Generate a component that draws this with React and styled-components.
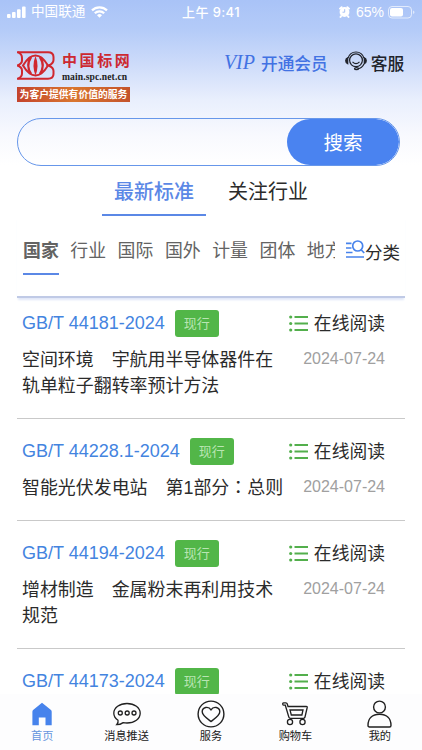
import React, { useState } from "react";
import styled, { createGlobalStyle } from "styled-components";

const standards = [
  {
    code: "GB/T 44181-2024",
    title: "空间环境　宇航用半导体器件在轨单粒子翻转率预计方法",
    date: "2024-07-24",
  },
  {
    code: "GB/T 44228.1-2024",
    title: "智能光伏发电站　第1部分：总则",
    date: "2024-07-24",
  },
  {
    code: "GB/T 44194-2024",
    title: "增材制造　金属粉末再利用技术规范",
    date: "2024-07-24",
  },
  { code: "GB/T 44173-2024", title: "", date: "" },
];

const categories = ["国家", "行业", "国际", "国外", "计量", "团体", "地方"];

const SignalIcon = () => (
  <svg width="19" height="12" viewBox="0 0 19 12" fill="#fff">
    <rect x="0" y="8" width="3.6" height="4" rx="1" />
    <rect x="5" y="6" width="3.6" height="6" rx="1" />
    <rect x="10" y="3.3" width="3.6" height="8.7" rx="1" />
    <rect x="15" y="0.5" width="3.6" height="11.5" rx="1" />
  </svg>
);

const WifiIcon = () => (
  <svg width="17" height="12" viewBox="0 0 17 12" fill="none" stroke="#fff" strokeWidth="2.2">
    <path d="M1 4.4a10.6 10.6 0 0 1 15 0" />
    <path d="M3.8 7.3a6.6 6.6 0 0 1 9.4 0" />
    <path d="M8.5 11.8 6 9.3a3.6 3.6 0 0 1 5 0z" fill="#fff" stroke="none" />
  </svg>
);

const AlarmIcon = () => (
  <svg width="11" height="12" viewBox="0 0 11 12">
    <circle cx="5.5" cy="6" r="4.9" fill="#fff" />
    <path d="M1 2.6 2.6 1.2M10 2.6 8.4 1.2M2 10.2 1.5 11M9 10.2l.5.8" stroke="#fff" strokeWidth="1.9" strokeLinecap="round" />
    <path d="M5.7 3.2v3H3.5" fill="none" stroke="#a9c1f2" strokeWidth="1" />
  </svg>
);

const BatteryIcon = () => (
  <svg width="27" height="13" viewBox="0 0 27 13">
    <rect x="0.5" y="0.5" width="23" height="11.5" rx="3.5" fill="none" stroke="#fff" opacity="0.65" />
    <rect x="2" y="2" width="13" height="8.5" rx="2" fill="#fff" />
    <path d="M25 4.5c2 .6 2 3 0 3.6z" fill="#fff" opacity="0.6" />
  </svg>
);

const LogoMark = () => (
  <svg width="38" height="29" viewBox="0 0 38 29" fill="none" stroke="#d0272f" strokeWidth="2">
    <path d="M0 1.2H31Q36.500 1.2 36.500 6V9Q36.500 12.5 31.500 14.5Q36.500 16.5 36.500 20V23Q36.500 27.7 31 27.7H0" />
    <path d="M1 1.2Q5 3 5 7V9.5Q5 13 0 14.5Q5 16 5 19.5V22.5Q5 26 1 27.7" />
    <path d="M6 14.5Q12 4.500 18.5 4.500T31 14.5Q25 24.500 18.5 24.500T6 14.5Z" />
    <path d="M14 6Q8.5 14.5 14 23M23 6Q28.5 14.5 23 23" strokeWidth="2.4" />
    <path d="M18.5 5Q22.5 14.5 18.5 24.5Q14.5 14.5 18.5 5Z" fill="#d0272f" stroke="none" />
  </svg>
);

const HeadsetIcon = () => (
  <svg width="22" height="20" viewBox="0 0 22 20" fill="none" stroke="#20232b" strokeWidth="1.2">
    <path d="M3 7.2C4.2 3.2 7 1 11 1s6.8 2.2 8 6.2" />
    <circle cx="11" cy="9.3" r="6.4" />
    <path d="M7.5 10.8q3.5 3.6 7 0" />
    <path d="M19 13q-2 4.3-6 4.6" />
    <path d="M2.7 6.8v6Q.7 12 .7 9.8t2-3zM19.3 6.8v6q2-.8 2-3t-2-3z" fill="#20232b" />
    <ellipse cx="11.5" cy="17.7" rx="2" ry="1" />
  </svg>
);

const FilterIcon = () => (
  <svg width="19" height="20" viewBox="0 0 19 20" fill="none" stroke="#4783ec" strokeWidth="1.7">
    <path d="M0 4.3h5.5M0 9h5.5M0 13.5h6.5M0 18h18" />
    <circle cx="11.7" cy="7" r="5" />
    <path d="m15.2 10.7 3 3.3" />
  </svg>
);

const ListIcon = () => (
  <svg width="19" height="17" viewBox="0 0 19 17" fill="#53af4c">
    <circle cx="1.7" cy="2" r="1.6" />
    <circle cx="1.7" cy="8.5" r="1.6" />
    <circle cx="1.7" cy="15" r="1.6" />
    <path d="M5.5 1.1H19v1.9H5.5zM5.5 7.6H19v1.9H5.5zM5.5 14.1H19v1.9H5.5z" />
  </svg>
);

const HomeIcon = () => (
  <svg width="20" height="24" viewBox="0 0 20 24">
    <path d="M10 .8 19 8Q19.7 8.7 19.7 9.7V23.2H13.5V15.5H6.8V23.2H.4V9.7Q.4 8.7 1.1 8Z" fill="#4783ec" />
  </svg>
);

const MessageIcon = () => (
  <svg width="28" height="24" viewBox="0 0 28 24" fill="none" stroke="#202020" strokeWidth="1.3">
    <path d="M5 18.2C2.3 16.5.8 14 .8 11.3.8 5.7 6.5 1.5 14 1.5s13.2 4.2 13.2 9.8S21.5 21 14 21q-2 0-3.8-.4Q7 22.8 3.7 22.7 5.6 20.7 5 18.2Z" />
    <circle cx="7.3" cy="11" r="2" />
    <circle cx="14.2" cy="11" r="2" />
    <circle cx="21" cy="11" r="2" />
  </svg>
);

const ServiceIcon = () => (
  <svg width="28" height="28" viewBox="0 0 28 28" fill="none" stroke="#202020" strokeWidth="1.4">
    <circle cx="14" cy="14" r="12.9" />
    <path d="M14 21.5C10 18.500 5.200 15.500 5.200 11.800 5.200 7 11.500 5.800 14 9.800 16.500 5.800 22.800 7 22.800 11.800 22.800 15.500 18 18.500 14 21.500Z" />
  </svg>
);

const CartIcon = () => (
  <svg width="26" height="24" viewBox="0 0 26 24" fill="none" stroke="#202020" strokeWidth="1.3">
    <path d="M6 4.5 5.3 2Q5 .9 3.9.9H1.5Q.7.9.7 2T1.5 3.2H3.3L6.8 15Q7.2 16.3 8.5 16.3H21.5Q22.7 16.3 23 15L25.2 5.5Q25.4 4.5 24.4 4.5Z" />
    <path d="M8 8H21L19.9 13H9.3Z" />
    <circle cx="8" cy="20" r="2.6" />
    <circle cx="20.5" cy="20" r="2.6" />
  </svg>
);

const UserIcon = () => (
  <svg width="25" height="28" viewBox="0 0 25 28" fill="none" stroke="#202020" strokeWidth="1.4">
    <circle cx="12.5" cy="7" r="5.9" />
    <path d="M1 25.5C1 18 5.7 14.300 12.5 14.300S24 18 24 25.5Q24 27 22.5 27H2.5Q1 27 1 25.5Z" />
  </svg>
);

const menus = [
  { name: "首页", icon: <HomeIcon /> },
  { name: "消息推送", icon: <MessageIcon /> },
  { name: "服务", icon: <ServiceIcon /> },
  { name: "购物车", icon: <CartIcon /> },
  { name: "我的", icon: <UserIcon /> },
];

export default function App() {
  const [text, setText] = useState("");
  const [tab, setTab] = useState("最新标准");
  const [category, setCategory] = useState("国家");
  const [menu, setMenu] = useState("首页");

  return (
    <Page>
      <GlobalStyle />
      <StatusBar>
        <StatusSide>
          <SignalIcon />
          <Carrier>中国联通</Carrier>
          <WifiIcon />
        </StatusSide>
        <Clock>上午 9:41</Clock>
        <StatusSide $end>
          <AlarmIcon />
          <Percent>65%</Percent>
          <BatteryIcon />
        </StatusSide>
      </StatusBar>
      <Header>
        <Logo>
          <LogoTop>
            <LogoMark />
            <LogoText>
              <LogoName>中国标网</LogoName>
              <LogoUrl>main.spc.net.cn</LogoUrl>
            </LogoText>
          </LogoTop>
          <Slogan>为客户提供有价值的服务</Slogan>
        </Logo>
        <Vip>
          <VipMark>VIP</VipMark>
          开通会员
        </Vip>
        <Support>
          <HeadsetIcon />
          客服
        </Support>
      </Header>
      <SearchBox>
        <SearchInput value={text} onChange={(e) => setText(e.target.value)} />
        <SearchButton>搜索</SearchButton>
      </SearchBox>
      <Tabs>
        {["最新标准", "关注行业"].map((name) => (
          <Tab key={name} $on={tab === name} onClick={() => setTab(name)}>
            {name}
          </Tab>
        ))}
      </Tabs>
      <CategoryBar>
        <CategoryScroll>
          {categories.map((name) => (
            <Category key={name} $on={category === name} onClick={() => setCategory(name)}>
              {name}
            </Category>
          ))}
        </CategoryScroll>
        <Sort>
          <FilterIcon />
          <span>分类</span>
        </Sort>
      </CategoryBar>
      <List>
        {standards.map((item) => (
          <Item key={item.code}>
            <ItemTop>
              <Code>{item.code}</Code>
              <Badge>现行</Badge>
              <Read>
                <ListIcon />
                在线阅读
              </Read>
            </ItemTop>
            {item.title && (
              <ItemBottom>
                <Title>
                  {item.title.split("：").map((part, i) => (
                    <React.Fragment key={part}>
                      {i > 0 && <Colon>：</Colon>}
                      {part}
                    </React.Fragment>
                  ))}
                </Title>
                <DateText>{item.date}</DateText>
              </ItemBottom>
            )}
          </Item>
        ))}
      </List>
      <BottomBar>
        {menus.map(({ name, icon }) => (
          <MenuButton key={name} $on={menu === name} onClick={() => setMenu(name)}>
            <MenuIcon>{icon}</MenuIcon>
            {name}
          </MenuButton>
        ))}
      </BottomBar>
    </Page>
  );
}

const GlobalStyle = createGlobalStyle`
  * {
    box-sizing: border-box;
  }
  body {
    margin: 0;
    font-family: "Liberation Sans", "Noto Sans CJK SC", sans-serif;
  }
  button {
    font-family: inherit;
    border: none;
    padding: 0;
    background: transparent;
    cursor: pointer;
  }
  svg {
    display: block;
    flex-shrink: 0;
  }
`;
const Page = styled.div`
  display: flex;
  flex-direction: column;
  width: 422px;
  height: 750px;
  overflow: hidden;
  color: #2b2b2b;
  background: linear-gradient(to bottom, #a9c3f7 0, #b4cbf8 30px, #cedcfa 65px, #e9effd 100px, #f8f9fe 135px, #fff 165px);
`;
const StatusBar = styled.div`
  display: grid;
  grid-template-columns: 1fr auto 1fr;
  align-items: center;
  height: 24px;
  padding: 0 7px;
  color: #fff;
`;
const StatusSide = styled.div`
  display: flex;
  align-items: center;
  justify-content: ${(props) => (props.$end ? "flex-end" : "flex-start")};
`;
const Carrier = styled.span`
  margin: 0 6px 0 5px;
  font-size: 13.6px;
  line-height: 20px;
`;
const Clock = styled.div`
  font-family: "Inter", "Noto Sans CJK SC", sans-serif;
  font-size: 13px;
  font-weight: 500;
  line-height: 20px;
  letter-spacing: 0.4px;
`;
const Percent = styled.span`
  margin: 0 4px 0 6px;
  font-size: 14px;
`;
const Header = styled.div`
  display: flex;
  height: 94px;
  padding: 27px 17px 0;
`;
const Logo = styled.div`
  width: 113px;
`;
const LogoTop = styled.div`
  display: flex;
  gap: 7px;
  height: 36px;
`;
const LogoText = styled.div`
  display: flex;
  flex-direction: column;
`;
const LogoName = styled.div`
  height: 20px;
  color: #cc2931;
  font-family: "Noto Sans CJK SC", sans-serif;
  font-size: 15px;
  font-weight: 700;
  line-height: 18px;
  letter-spacing: 2.6px;
  white-space: nowrap;
`;
const LogoUrl = styled.div`
  color: #222;
  font-family: "Liberation Serif", serif;
  font-size: 9.6px;
  font-weight: 700;
  line-height: 11px;
  letter-spacing: 0.1px;
`;
const Slogan = styled.div`
  height: 15px;
  color: #fff;
  background: linear-gradient(to right, #c4432c, #d9762f 50%, #c4532c);
  font-size: 9.8px;
  font-weight: 700;
  line-height: 15px;
  text-align: center;
  white-space: nowrap;
`;
const Vip = styled.div`
  display: flex;
  align-items: center;
  height: 23px;
  margin-left: 94px;
  color: #4272e3;
  font-size: 16.7px;
  font-weight: 500;
  white-space: nowrap;
`;
const VipMark = styled.span`
  width: 37px;
  font-family: "Liberation Serif", serif;
  font-size: 20px;
  font-style: italic;
  font-weight: 400;
  letter-spacing: -0.1px;
`;
const Support = styled.div`
  display: flex;
  align-items: center;
  gap: 4px;
  height: 23px;
  margin-left: 17px;
  color: #20232b;
  font-size: 16.7px;
  font-weight: 500;
  white-space: nowrap;

  svg {
    margin-bottom: 3px;
  }
`;
const SearchBox = styled.div`
  display: flex;
  flex-shrink: 0;
  width: 383px;
  height: 48px;
  margin-left: 17px;
  border: 1.5px solid #6797ea;
  border-radius: 24px;
  overflow: hidden;
`;
const SearchInput = styled.input`
  flex: 1;
  min-width: 0;
  padding: 0 20px;
  border: none;
  outline: none;
  background: transparent;
  font-size: 18px;
`;
const SearchButton = styled.button`
  width: 112px;
  padding-bottom: 1px;
  border-radius: 24px;
  color: #fff;
  background: #4a83f0;
  font-size: 19.5px;
`;
const Tabs = styled.div`
  display: flex;
  flex-shrink: 0;
  gap: 10px;
  height: 50px;
  padding-left: 102px;
`;
const Tab = styled.button`
  width: 104px;
  height: 50px;
  border-bottom: 2px solid ${(props) => (props.$on ? "#5b88e6" : "transparent")};
  color: ${(props) => (props.$on ? "#5b88e6" : "#2b2b2b")};
  font-size: 20px;
  font-weight: ${(props) => (props.$on ? 500 : 400)};
`;
const CategoryBar = styled.div`
  display: flex;
  flex-shrink: 0;
  justify-content: space-between;
  height: 82px;
  margin: 0 17px;
  padding: 16px 5px 0 6px;
  border-bottom: 2px solid #c0cae6;
  box-shadow: 0 3px 2px -1px #e0e7f8;
`;
const CategoryScroll = styled.div`
  display: flex;
  gap: 11.5px;
  width: 312px;
  overflow: hidden;
`;
const Category = styled.button`
  flex-shrink: 0;
  height: 43px;
  padding-bottom: 7px;
  border-bottom: 2px solid ${(props) => (props.$on ? "#5b88e6" : "transparent")};
  color: #636363;
  font-size: 17.9px;
  font-weight: ${(props) => (props.$on ? 700 : 400)};
`;
const Sort = styled.div`
  display: flex;
  align-items: center;
  height: 38px;
  font-size: 17.5px;
  white-space: nowrap;

  svg {
    margin-bottom: 5px;
  }
`;
const List = styled.div`
  flex: 1;
  min-height: 0;
  margin: 0 17px;
  overflow: hidden;
`;
const Item = styled.div`
  padding: 19px 20px 19px 5px;
  border-bottom: 1px solid #c9c9c9;

  &:first-child {
    padding-top: 12px;
  }
`;
const ItemTop = styled.div`
  display: flex;
  align-items: center;
  height: 27px;
`;
const Code = styled.div`
  color: #4384df;
  font-size: 18px;
  line-height: 25px;
  padding-bottom: 1px;
`;
const Badge = styled.div`
  width: 44px;
  height: 27px;
  margin-left: 10px;
  border-radius: 3px;
  color: #b9e5b3;
  background: #52b648;
  font-size: 13px;
  line-height: 28px;
  text-align: center;
`;
const Read = styled.div`
  display: flex;
  align-items: center;
  gap: 6px;
  margin-left: auto;
  font-size: 17.8px;
  line-height: 26px;
  white-space: nowrap;
`;
const ItemBottom = styled.div`
  display: flex;
  justify-content: space-between;
  padding-top: 10px;
`;
const Title = styled.div`
  width: 264px;
  font-size: 17.95px;
  line-height: 26px;
`;
const Colon = styled.span`
  font-family: "Noto Sans CJK TC", sans-serif;
  line-height: 1;
`;
const DateText = styled.div`
  color: #a0a0a0;
  font-size: 16px;
  line-height: 23px;
`;
const BottomBar = styled.div`
  display: flex;
  flex-shrink: 0;
  height: 56px;
  background: #fdfdfe;
`;
const MenuButton = styled.button`
  flex: 1;
  display: flex;
  flex-direction: column;
  align-items: center;
  color: ${(props) => (props.$on ? "#6595dd" : "#202020")};
  font-size: 11.2px;
  line-height: 16px;
`;
const MenuIcon = styled.div`
  display: flex;
  align-items: center;
  height: 28px;
  margin: 6px 0 0;
`;
